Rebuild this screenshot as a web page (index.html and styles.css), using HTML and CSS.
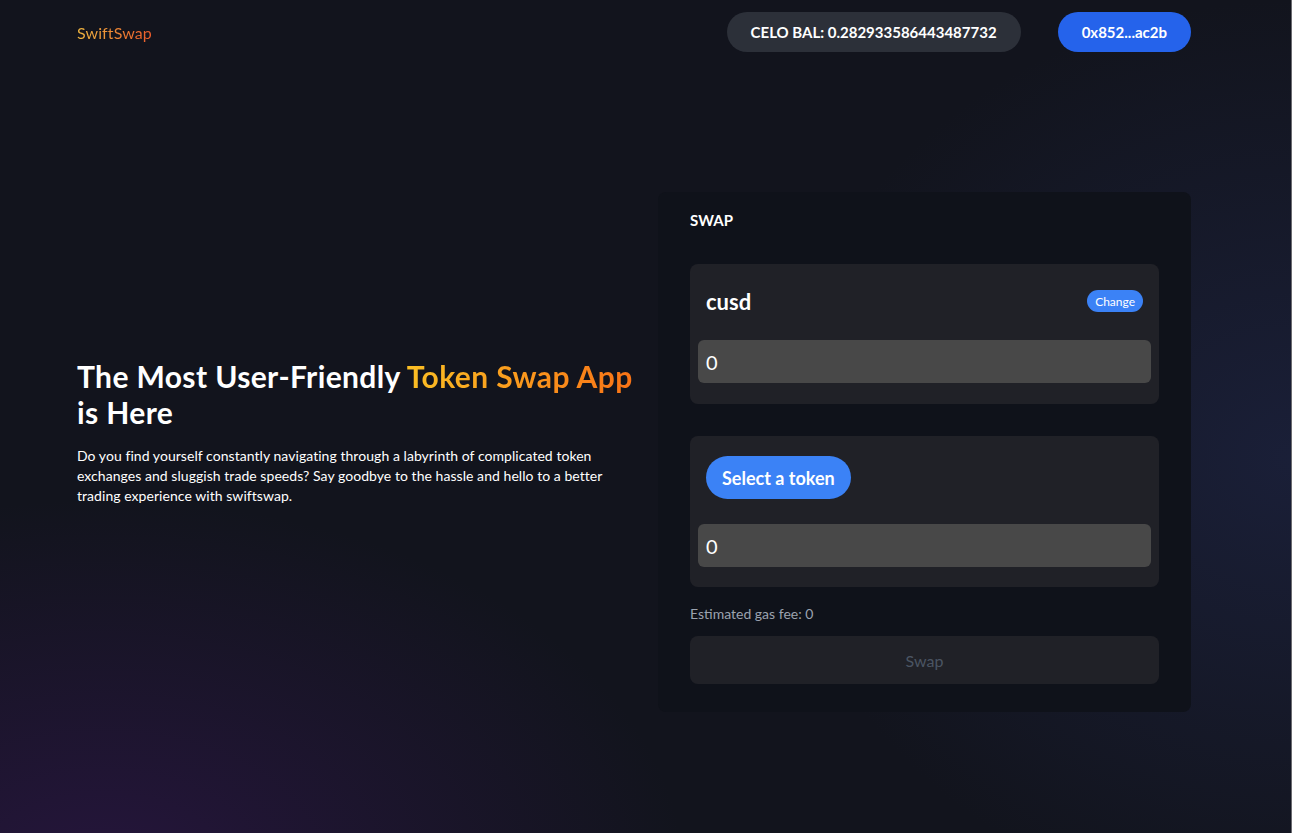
FILE: index.html
```html
<!DOCTYPE html>
<html lang="en">
<head>
<meta charset="utf-8">
<title>SwiftSwap</title>
<link rel="stylesheet" href="styles.css">
</head>
<body>
<div class="page">
  <header class="nav">
    <div class="logo">SwiftSwap</div>
    <div class="nav-right">
      <div class="balance">CELO BAL: 0.282933586443487732</div>
      <button class="address">0x852...ac2b</button>
    </div>
  </header>
  <main class="hero">
    <section class="intro">
      <h1 class="headline">The Most User-Friendly <span class="accent">Token Swap App</span> is Here</h1>
      <p class="lead">Do you find yourself constantly navigating through a labyrinth of complicated token exchanges and sluggish trade speeds? Say goodbye to the hassle and hello to a better trading experience with swiftswap.</p>
    </section>
    <section class="card">
      <div class="card-title">SWAP</div>
      <div class="token-box">
        <div class="token-row">
          <span class="token-name">cusd</span>
          <button class="change-btn">Change</button>
        </div>
        <div class="amount">0</div>
      </div>
      <div class="token-box second">
        <div class="token-row">
          <button class="select-btn">Select a token</button>
        </div>
        <div class="amount">0</div>
      </div>
      <div class="gas">Estimated gas fee: 0</div>
      <button class="swap-btn">Swap</button>
    </section>
  </main>
</div>
</body>
</html>
```

FILE: styles.css
```css
* { box-sizing: border-box; }
html, body { margin: 0; padding: 0; height: 100%; }
body {
  font-family: "Lato", "Noto Sans", sans-serif;
  color: #fff;
  background:
    radial-gradient(ellipse 45% 45% at 8% 105%, rgba(50, 22, 80, 0.6), transparent 100%),
    radial-gradient(ellipse 40% 55% at 100% 55%, rgba(34, 42, 82, 0.5), transparent 100%),
    #12141d;
  min-height: 833px;
  border-right: 1px solid #6b6b70;
}
.page { width: 1114px; margin-left: 77px; }
.nav {
  display: flex;
  align-items: center;
  justify-content: space-between;
  height: 64px;
}
.logo {
  font-size: 16px;
  letter-spacing: 0.1px;
  background: linear-gradient(90deg, #efb640, #ec5a2a);
  -webkit-background-clip: text;
  background-clip: text;
  color: transparent;
  margin-top: 1px;
}
.nav-right { display: flex; align-items: center; gap: 37px; }
.balance {
  height: 40px;
  padding: 0 24px;
  border-radius: 20px;
  background: #2c3039;
  font-weight: 700;
  font-size: 15px;
  display: flex;
  align-items: center;
}
.address {
  height: 40px;
  padding: 0 24px;
  border-radius: 20px;
  background: #2563eb;
  color: #fff;
  border: 0;
  font-family: inherit;
  font-weight: 700;
  font-size: 15px;
}
.hero {
  display: flex;
  align-items: center;
  justify-content: space-between;
  margin-top: 128px;
}
.intro { width: 560px; padding-bottom: 38px; }
.headline {
  margin: 0;
  font-size: 30px;
  line-height: 36px;
  font-weight: 700;
  letter-spacing: 0.38px;
  margin-top: -2px;
}
.accent {
  background: linear-gradient(90deg, #fbbf24, #f97316);
  -webkit-background-clip: text;
  background-clip: text;
  color: transparent;
}
.lead {
  margin: 16px 0 0;
  font-size: 14px;
  line-height: 20px;
  width: 540px;
  letter-spacing: 0.05px;
}
.card {
  width: 533px;
  background: #0f121a;
  border-radius: 8px;
  padding: 20px 32px 28px;
}
.card-title { font-size: 15px; font-weight: 700; height: 16px; line-height: 16px; margin-bottom: 36px; }
.token-box {
  background: #202127;
  border-radius: 8px;
  padding: 20px 8px 21px;
}
.token-box.second { margin-top: 32px; padding-bottom: 20px; }
.token-row {
  display: flex;
  align-items: center;
  justify-content: space-between;
  padding: 0 8px 0 8px;
  height: 34px;
  margin-bottom: 22px;
}
.token-box.second .token-row { height: 43px; margin-bottom: 25px; }
.token-name { font-size: 22px; font-weight: 700; }
.change-btn {
  background: #3b82f6;
  color: #fff;
  border: 0;
  border-radius: 12px;
  height: 22px;
  padding: 0 8px;
  font-family: inherit;
  font-size: 12px;
}
.select-btn {
  background: #3b82f6;
  color: #fff;
  border: 0;
  border-radius: 22px;
  height: 43px;
  padding: 0 16px;
  font-family: inherit;
  font-size: 18px;
  font-weight: 700;
}
.amount {
  height: 43px;
  background: #484848;
  border-radius: 6px;
  padding: 0 8px;
  font-size: 20px;
  display: flex;
  align-items: center;
}
.gas {
  margin-top: 17px;
  font-size: 14px;
  color: #9ca3af;
  height: 20px;
  line-height: 20px;
}
.swap-btn {
  margin-top: 12px;
  width: 100%;
  height: 48px;
  background: #202127;
  border: 0;
  border-radius: 8px;
  color: #4b5563;
  font-family: inherit;
  font-size: 16px;
}
```
